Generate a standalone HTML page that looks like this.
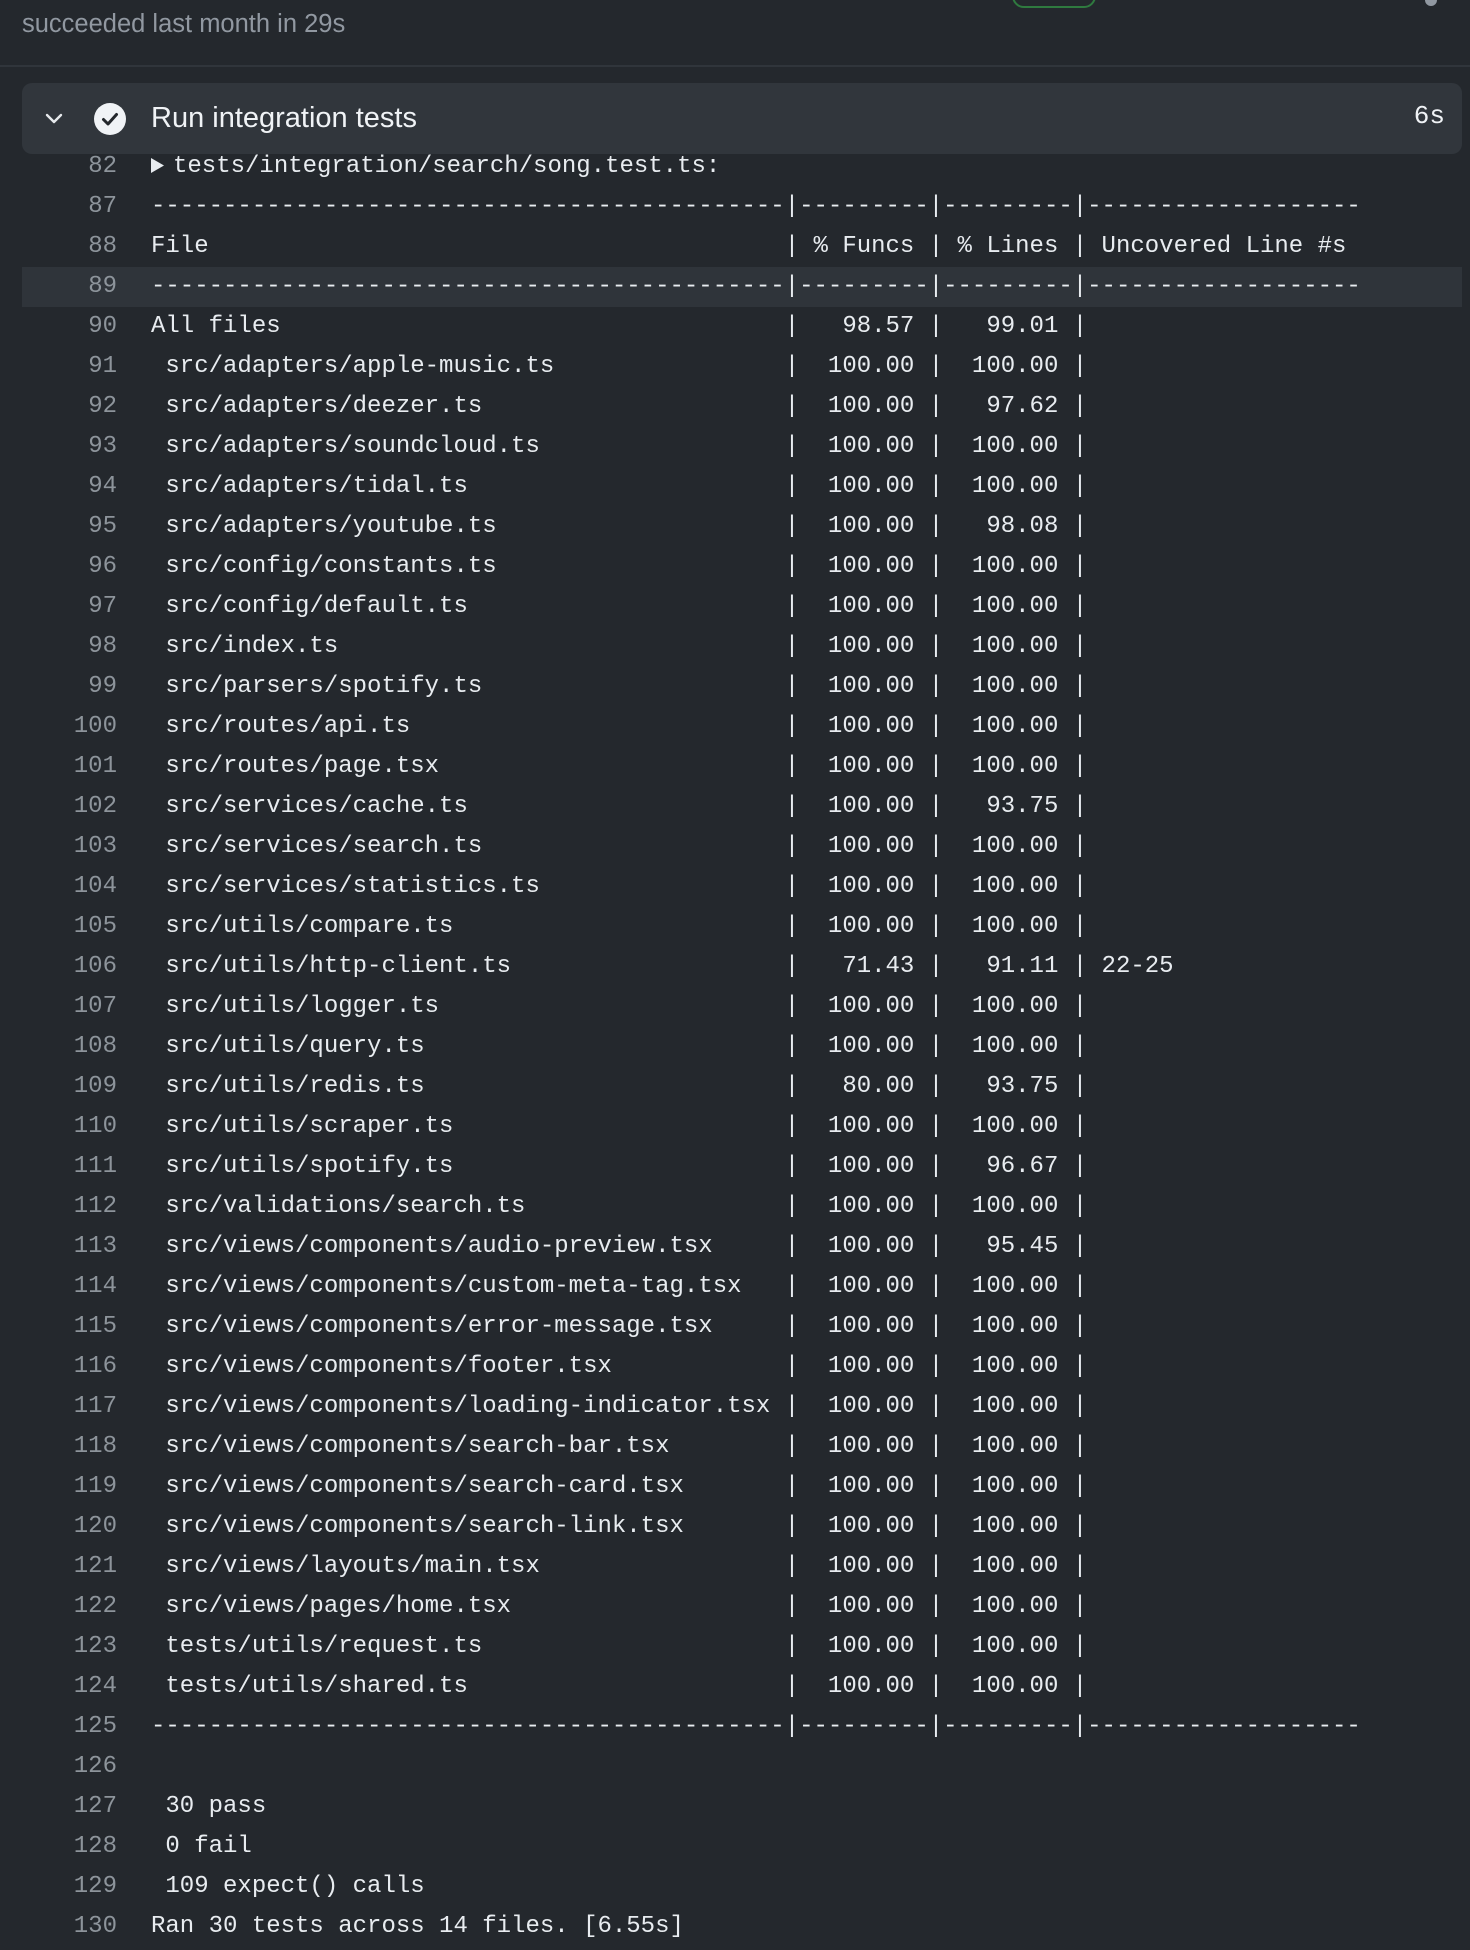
<!DOCTYPE html>
<html><head><meta charset="utf-8">
<style>
html,body{margin:0;padding:0;}
body{width:1470px;height:1950px;overflow:hidden;background:#24282d;position:relative;font-family:"Liberation Sans",sans-serif;}
.status{position:absolute;left:22px;top:10px;font-size:25.5px;color:#9198a1;}
.divider{position:absolute;left:0;top:65px;width:1470px;height:2px;background:#30353b;}
.pill{position:absolute;left:1012px;top:-20px;width:80px;height:24px;border:2px solid #2f7a3f;border-radius:12px;}
.dot{position:absolute;left:1425px;top:-6px;width:12px;height:12px;border-radius:50%;background:#9198a1;}
.head{position:absolute;left:22px;top:83px;width:1440px;height:71px;background:#31363c;border-radius:10px;z-index:2;}
.head .title{position:absolute;left:129px;top:19px;font-size:29px;color:#f0f3f6;}
.head .time{position:absolute;right:17px;top:18px;font-family:"Liberation Mono",monospace;font-size:26px;color:#f0f3f6;}
.log{position:absolute;left:0;top:147px;width:1470px;font-family:"Liberation Mono",monospace;font-size:24px;color:#e8ecf0;}
.l{height:40px;line-height:40px;white-space:pre;position:relative;}
.l.hl{background:linear-gradient(#2f343a,#2f343a) 22px 0/1440px 100% no-repeat;}
.n{display:inline-block;width:117px;text-align:right;color:#8d949b;margin-right:34px;}
.c{display:inline-block;width:44ch;}
.tri{display:inline-block;width:22px;height:40px;vertical-align:top;}
</style></head><body>
<div class="status">succeeded last month in 29s</div>
<div class="pill"></div><div class="dot"></div>
<div class="divider"></div>
<div class="head">
<svg style="position:absolute;left:22px;top:29px" width="20" height="14" viewBox="0 0 20 14"><path d="M3 3 L10 10 L17 3" fill="none" stroke="#e6e9ec" stroke-width="2.4" stroke-linecap="round" stroke-linejoin="round"/></svg>
<svg style="position:absolute;left:72px;top:20px" width="32" height="32" viewBox="0 0 32 32"><circle cx="16" cy="16" r="16" fill="#f0f3f6"/><path d="M9.5 16.5 L14 21 L22.5 11.5" fill="none" stroke="#24282d" stroke-width="3" stroke-linecap="round" stroke-linejoin="round"/></svg>
<div class="title">Run integration tests</div>
<div class="time">6s</div>
</div>
<div class="log">
<div class="l"><span class="n">82</span><svg class="tri" viewBox="0 0 22 40"><path d="M0 11 L13 18.5 L0 26 Z" fill="#e8ecf0"/></svg>tests/integration/search/song.test.ts:</div>
<div class="l"><span class="n">87</span>--------------------------------------------|---------|---------|-------------------</div>
<div class="l"><span class="n">88</span><span class="c">File</span>| % Funcs | % Lines | Uncovered Line #s</div>
<div class="l hl"><span class="n">89</span>--------------------------------------------|---------|---------|-------------------</div>
<div class="l"><span class="n">90</span><span class="c">All files</span>|   98.57 |   99.01 |</div>
<div class="l"><span class="n">91</span><span class="c"> src/adapters/apple-music.ts</span>|  100.00 |  100.00 |</div>
<div class="l"><span class="n">92</span><span class="c"> src/adapters/deezer.ts</span>|  100.00 |   97.62 |</div>
<div class="l"><span class="n">93</span><span class="c"> src/adapters/soundcloud.ts</span>|  100.00 |  100.00 |</div>
<div class="l"><span class="n">94</span><span class="c"> src/adapters/tidal.ts</span>|  100.00 |  100.00 |</div>
<div class="l"><span class="n">95</span><span class="c"> src/adapters/youtube.ts</span>|  100.00 |   98.08 |</div>
<div class="l"><span class="n">96</span><span class="c"> src/config/constants.ts</span>|  100.00 |  100.00 |</div>
<div class="l"><span class="n">97</span><span class="c"> src/config/default.ts</span>|  100.00 |  100.00 |</div>
<div class="l"><span class="n">98</span><span class="c"> src/index.ts</span>|  100.00 |  100.00 |</div>
<div class="l"><span class="n">99</span><span class="c"> src/parsers/spotify.ts</span>|  100.00 |  100.00 |</div>
<div class="l"><span class="n">100</span><span class="c"> src/routes/api.ts</span>|  100.00 |  100.00 |</div>
<div class="l"><span class="n">101</span><span class="c"> src/routes/page.tsx</span>|  100.00 |  100.00 |</div>
<div class="l"><span class="n">102</span><span class="c"> src/services/cache.ts</span>|  100.00 |   93.75 |</div>
<div class="l"><span class="n">103</span><span class="c"> src/services/search.ts</span>|  100.00 |  100.00 |</div>
<div class="l"><span class="n">104</span><span class="c"> src/services/statistics.ts</span>|  100.00 |  100.00 |</div>
<div class="l"><span class="n">105</span><span class="c"> src/utils/compare.ts</span>|  100.00 |  100.00 |</div>
<div class="l"><span class="n">106</span><span class="c"> src/utils/http-client.ts</span>|   71.43 |   91.11 | 22-25</div>
<div class="l"><span class="n">107</span><span class="c"> src/utils/logger.ts</span>|  100.00 |  100.00 |</div>
<div class="l"><span class="n">108</span><span class="c"> src/utils/query.ts</span>|  100.00 |  100.00 |</div>
<div class="l"><span class="n">109</span><span class="c"> src/utils/redis.ts</span>|   80.00 |   93.75 |</div>
<div class="l"><span class="n">110</span><span class="c"> src/utils/scraper.ts</span>|  100.00 |  100.00 |</div>
<div class="l"><span class="n">111</span><span class="c"> src/utils/spotify.ts</span>|  100.00 |   96.67 |</div>
<div class="l"><span class="n">112</span><span class="c"> src/validations/search.ts</span>|  100.00 |  100.00 |</div>
<div class="l"><span class="n">113</span><span class="c"> src/views/components/audio-preview.tsx</span>|  100.00 |   95.45 |</div>
<div class="l"><span class="n">114</span><span class="c"> src/views/components/custom-meta-tag.tsx</span>|  100.00 |  100.00 |</div>
<div class="l"><span class="n">115</span><span class="c"> src/views/components/error-message.tsx</span>|  100.00 |  100.00 |</div>
<div class="l"><span class="n">116</span><span class="c"> src/views/components/footer.tsx</span>|  100.00 |  100.00 |</div>
<div class="l"><span class="n">117</span><span class="c"> src/views/components/loading-indicator.tsx</span>|  100.00 |  100.00 |</div>
<div class="l"><span class="n">118</span><span class="c"> src/views/components/search-bar.tsx</span>|  100.00 |  100.00 |</div>
<div class="l"><span class="n">119</span><span class="c"> src/views/components/search-card.tsx</span>|  100.00 |  100.00 |</div>
<div class="l"><span class="n">120</span><span class="c"> src/views/components/search-link.tsx</span>|  100.00 |  100.00 |</div>
<div class="l"><span class="n">121</span><span class="c"> src/views/layouts/main.tsx</span>|  100.00 |  100.00 |</div>
<div class="l"><span class="n">122</span><span class="c"> src/views/pages/home.tsx</span>|  100.00 |  100.00 |</div>
<div class="l"><span class="n">123</span><span class="c"> tests/utils/request.ts</span>|  100.00 |  100.00 |</div>
<div class="l"><span class="n">124</span><span class="c"> tests/utils/shared.ts</span>|  100.00 |  100.00 |</div>
<div class="l"><span class="n">125</span>--------------------------------------------|---------|---------|-------------------</div>
<div class="l"><span class="n">126</span></div>
<div class="l"><span class="n">127</span> 30 pass</div>
<div class="l"><span class="n">128</span> 0 fail</div>
<div class="l"><span class="n">129</span> 109 expect() calls</div>
<div class="l"><span class="n">130</span>Ran 30 tests across 14 files. [6.55s]</div>
</div>
</body></html>
